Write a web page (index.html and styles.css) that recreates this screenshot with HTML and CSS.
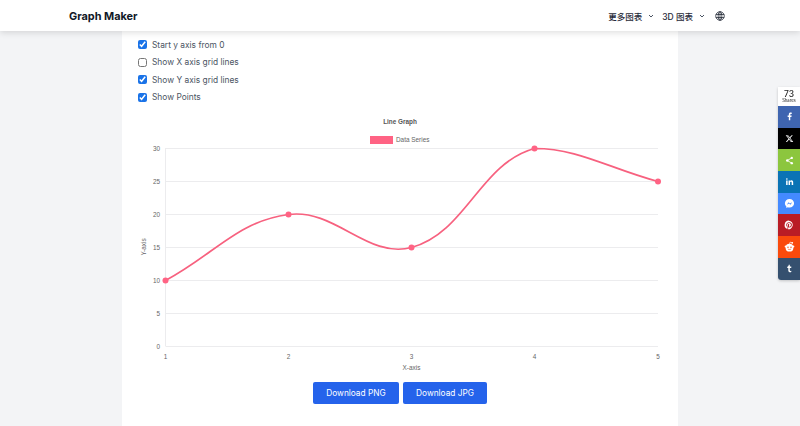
FILE: index.html
```html
<!DOCTYPE html>
<html lang="zh">
<head>
<meta charset="utf-8">
<title>Graph Maker</title>
<link rel="stylesheet" href="styles.css">
</head>
<body>
<header class="topbar">
  <a class="brand" href="#">Graph Maker</a>
  <nav class="nav">
    <a class="nav-item" href="#">更多图表<svg class="chev" viewBox="0 0 6 4"><path d="M1 1l2 2 2-2"/></svg></a>
    <a class="nav-item" href="#">3D 图表<svg class="chev" viewBox="0 0 6 4"><path d="M1 1l2 2 2-2"/></svg></a>
    <svg class="globe" viewBox="0 0 20 20"><circle cx="10" cy="10" r="8.6"/><ellipse cx="10" cy="10" rx="3.8" ry="8.6"/><path d="M1.8 7h16.4M1.8 13h16.4M10 1.4v17.2"/></svg>
  </nav>
</header>

<main class="card">
  <div class="options">
    <label class="option"><input type="checkbox" checked>Start y axis from 0</label>
    <label class="option"><input type="checkbox">Show X axis grid lines</label>
    <label class="option"><input type="checkbox" checked>Show Y axis grid lines</label>
    <label class="option"><input type="checkbox" checked>Show Points</label>
  </div>

  <svg class="chart" viewBox="138 112 524 262">
    <g class="grid">
      <path d="M165.5 148.500H658M165.500 181.500H658M165.500 214.500H658M165.500 247.500H658M165.500 280.500H658M165.500 313.500H658M165.500 346.500H658M165.500 148V346"/>
    </g>
    <text class="title" x="400" y="123.500">Line Graph</text>
    <rect class="swatch" x="370" y="136" width="23" height="8"/>
    <text class="tick start" x="396" y="142.300">Data Series</text>
    <g class="ylabels">
      <text class="tick end" x="160" y="150.500">30</text>
      <text class="tick end" x="160" y="183.500">25</text>
      <text class="tick end" x="160" y="216.500">20</text>
      <text class="tick end" x="160" y="249.500">15</text>
      <text class="tick end" x="160" y="282.500">10</text>
      <text class="tick end" x="160" y="315.500">5</text>
      <text class="tick end" x="160" y="348.500">0</text>
    </g>
    <g class="xlabels">
      <text class="tick" x="165.500" y="358.500">1</text>
      <text class="tick" x="288.500" y="358.500">2</text>
      <text class="tick" x="411.500" y="358.500">3</text>
      <text class="tick" x="534.500" y="358.500">4</text>
      <text class="tick" x="658" y="358.500">5</text>
    </g>
    <text class="tick" x="411.500" y="369.500">X-axis</text>
    <text class="tick" transform="translate(146 247) rotate(-90)">Y-axis</text>
    <path class="line" d="M165.500 280.500C214.700 254.100 237 221.400 288.500 214.500C335.400 208.200 367.600 259.300 411.500 247.500C466 232.900 480 163.100 534.500 148.500C578.600 148.500 608.600 168.300 658 181.500"/>
    <g class="points">
      <circle cx="165.500" cy="280.500" r="3"/>
      <circle cx="288.500" cy="214.500" r="3"/>
      <circle cx="411.500" cy="247.500" r="3"/>
      <circle cx="534.500" cy="148.500" r="3"/>
      <circle cx="658" cy="181.500" r="3"/>
    </g>
  </svg>

  <div class="actions">
    <button class="btn btn-png" type="button">Download PNG</button>
    <button class="btn btn-jpg" type="button">Download JPG</button>
  </div>
</main>

<aside class="share">
  <div class="share-count"><strong>73</strong><span>Shares</span></div>
  <a class="share-btn fb" href="#"><svg viewBox="0 0 24 24"><path d="M14 22v-9h3.200l.6-3.800H14V7c0-1.100.4-1.900 1.900-1.900H18V1.700C17.600 1.600 16.400 1.500 15.100 1.500 12.300 1.500 10.200 3.300 10.200 6.600v2.600H7V13h3.200v9z"/></svg></a>
  <a class="share-btn xx" href="#"><svg viewBox="0 0 24 24"><path d="M17.800 3h3.100l-6.800 7.700L22 21h-6.200l-4.900-6.400L5.300 21H2.200l7.200-8.300L1.800 3h6.400l4.400 5.800zm-1.100 16.200h1.700L7.300 4.700H5.500z"/></svg></a>
  <a class="share-btn sh" href="#"><svg viewBox="0 0 24 24"><circle cx="18" cy="5" r="3.200"/><circle cx="6" cy="12" r="3.200"/><circle cx="18" cy="19" r="3.200"/><path class="share-link" d="M18 5L6 12l12 7"/></svg></a>
  <a class="share-btn li" href="#"><svg viewBox="0 0 24 24"><path d="M3 9h4v12H3zM5 3a2.200 2.200 0 1 1 0 4.400A2.200 2.200 0 0 1 5 3zM9.500 9h3.800v1.700c.6-1 1.900-2 3.800-2 4 0 4.700 2.600 4.700 6V21h-4v-5.500c0-1.400 0-3.100-1.900-3.100s-2.400 1.500-2.400 3V21h-4z"/></svg></a>
  <a class="share-btn ms" href="#"><svg viewBox="0 0 24 24"><path d="M12 2C6.300 2 2 6.100 2 11.600c0 2.900 1.200 5.400 3.100 7.100V22l3-1.700c1.200.4 2.500.6 3.900.6 5.700 0 10-4.100 10-9.300S17.700 2 12 2z"/><path class="ms-bolt" d="M6 14.500l4-5 3 2.600 5-2.600-4 5-3-2.600z"/></svg></a>
  <a class="share-btn pi" href="#"><svg viewBox="0 0 24 24"><path d="M12 1.500a10.500 10.500 0 0 0-3.800 20.300c-.1-.8-.2-2.100 0-3l1.300-5.300s-.3-.7-.3-1.600c0-1.500.9-2.600 2-2.600.9 0 1.400.7 1.400 1.500 0 .9-.6 2.300-.9 3.500-.2 1 .5 1.900 1.500 1.900 1.900 0 3.300-2 3.300-4.800 0-2.500-1.800-4.300-4.400-4.300-3 0-4.800 2.300-4.800 4.600 0 .9.400 1.900.8 2.400l.1.400-.3 1.200c0 .2-.2.300-.4.200-1.300-.6-2.100-2.500-2.100-4.100 0-3.300 2.400-6.400 7-6.400 3.700 0 6.500 2.600 6.500 6.100 0 3.700-2.300 6.600-5.500 6.600-1.100 0-2.100-.6-2.500-1.200l-.7 2.600c-.2.900-.9 2.100-1.300 2.800A10.500 10.500 0 1 0 12 1.500z"/></svg></a>
  <a class="share-btn re" href="#"><svg viewBox="0 0 24 24"><circle cx="12" cy="14.500" r="8.500"/><circle cx="3.700" cy="12" r="2.300"/><circle cx="20.300" cy="12" r="2.300"/><circle cx="18" cy="4" r="1.900"/><path class="re-stalk" d="M12 7l1.300-4.500L18 4"/><circle class="re-eye" cx="8.700" cy="13.500" r="1.500"/><circle class="re-eye" cx="15.300" cy="13.500" r="1.500"/><path class="re-mouth" d="M8.500 17.500c2 1.500 5 1.500 7 0"/></svg></a>
  <a class="share-btn tu" href="#"><svg viewBox="0 0 24 24"><path d="M14.500 22c-3.700 0-5.700-1.900-5.700-5v-6.300H6V7.600C8.900 6.700 9.700 4.600 9.900 2h2.900v4.800h3.900v3.900h-3.900v5.800c0 1.500.8 2 2 2 .7 0 1.300-.2 2-.5V21c-.7.500-1.500 1-2.300 1z"/></svg></a>
</aside>
</body>
</html>
```

FILE: styles.css
```css
* { box-sizing: border-box; }
html, body { height: 100%; }
body {
  margin: 0;
  overflow: hidden;
  background: #f3f4f6;
  color: #374151;
  font-family: Inter, "Noto Sans CJK SC", sans-serif;
  display: flex;
  flex-direction: column;
}
a { color: inherit; text-decoration: none; }

.topbar {
  flex: none;
  height: 31px;
  padding: 0 75px 0 69px;
  background: #fff;
  box-shadow: 0 2px 6px rgba(0, 0, 0, .12);
  display: flex;
  align-items: center;
  justify-content: space-between;
  position: relative;
  z-index: 2;
}
.brand { font-size: 10.9px; font-weight: 700; color: #111827; }
.nav { display: flex; align-items: center; gap: 8px; }
.nav-item {
  display: flex;
  align-items: center;
  gap: 6px;
  font-size: 8.5px;
  font-weight: 500;
  color: #1f2937;
}
.chev { width: 6px; height: 4px; fill: none; stroke: #374151; stroke-width: .9; }
.globe { width: 10px; height: 10px; margin-left: 2px; fill: none; stroke: #111827; stroke-width: 1.4; }

.card {
  flex: 1;
  width: 556px;
  margin: 0 auto;
  padding: 5px 16px 0;
  background: #fff;
}
.options { display: flex; flex-direction: column; }
.option {
  height: 17.5px;
  display: flex;
  align-items: center;
  gap: 5px;
  font-size: 8.4px;
  color: #4b5563;
}
.option input {
  width: 9px;
  height: 9px;
  margin: 0;
  accent-color: #1a73e8;
}

.chart { display: block; width: 524px; height: 262px; margin-top: 6px; }
.grid path { fill: none; stroke: #ececee; stroke-width: 1; }
.title { font: 700 6.4px "Liberation Sans", sans-serif; fill: #555; text-anchor: middle; }
.tick { font: 6.4px "Liberation Sans", sans-serif; fill: #666; text-anchor: middle; }
.tick.start { text-anchor: start; }
.tick.end { text-anchor: end; }
.swatch { fill: #ff6384; }
.line { fill: none; stroke: #f7617f; stroke-width: 1.7; }
.points circle { fill: #ff6384; }

.actions { display: flex; justify-content: center; gap: 4px; margin-top: 8px; }
.btn {
  height: 22px;
  padding: 0;
  border: 0;
  border-radius: 2px;
  background: #2563eb;
  color: #fff;
  font: 400 8.3px Inter, sans-serif;
}
.btn-png { width: 86px; }
.btn-jpg { width: 84px; }

.share {
  position: fixed;
  top: 87px;
  right: 0;
  width: 22px;
  border-radius: 0 0 0 3px;
  overflow: hidden;
  box-shadow: 0 1px 3px rgba(0, 0, 0, .2);
  background: #fff;
}
.share-count {
  height: 19px;
  display: flex;
  flex-direction: column;
  align-items: center;
  justify-content: center;
  line-height: 1;
  color: #222;
}
.share-count strong { font-size: 8.5px; font-weight: 500; }
.share-count span { font-size: 4.2px; margin-top: 1px; }
.share-btn {
  height: 21.7px;
  display: flex;
  align-items: center;
  justify-content: center;
}
.share-btn svg { width: 9px; height: 9px; fill: #fff; }
.fb { background: #3f65b0; }
.xx { background: #000; }
.sh { background: #8cc63e; }
.li { background: #0a73b5; }
.ms { background: #448aff; }
.pi { background: #b91c25; }
.re { background: #fa4a0c; }
.tu { background: #35506f; }
.share-btn.ms svg { width: 11px; height: 11px; }
.share-btn.pi svg { width: 10px; height: 10px; }
.share-btn.re svg { width: 11px; height: 11px; }
.share-link { fill: none; stroke: #fff; stroke-width: 2.2; }
.ms-bolt { fill: #448aff; }
.re-stalk { fill: none; stroke: #fff; stroke-width: 1.4; }
.re-eye { fill: #fa4a0c; }
.re-mouth { fill: none; stroke: #fa4a0c; stroke-width: 1.4; }
```
